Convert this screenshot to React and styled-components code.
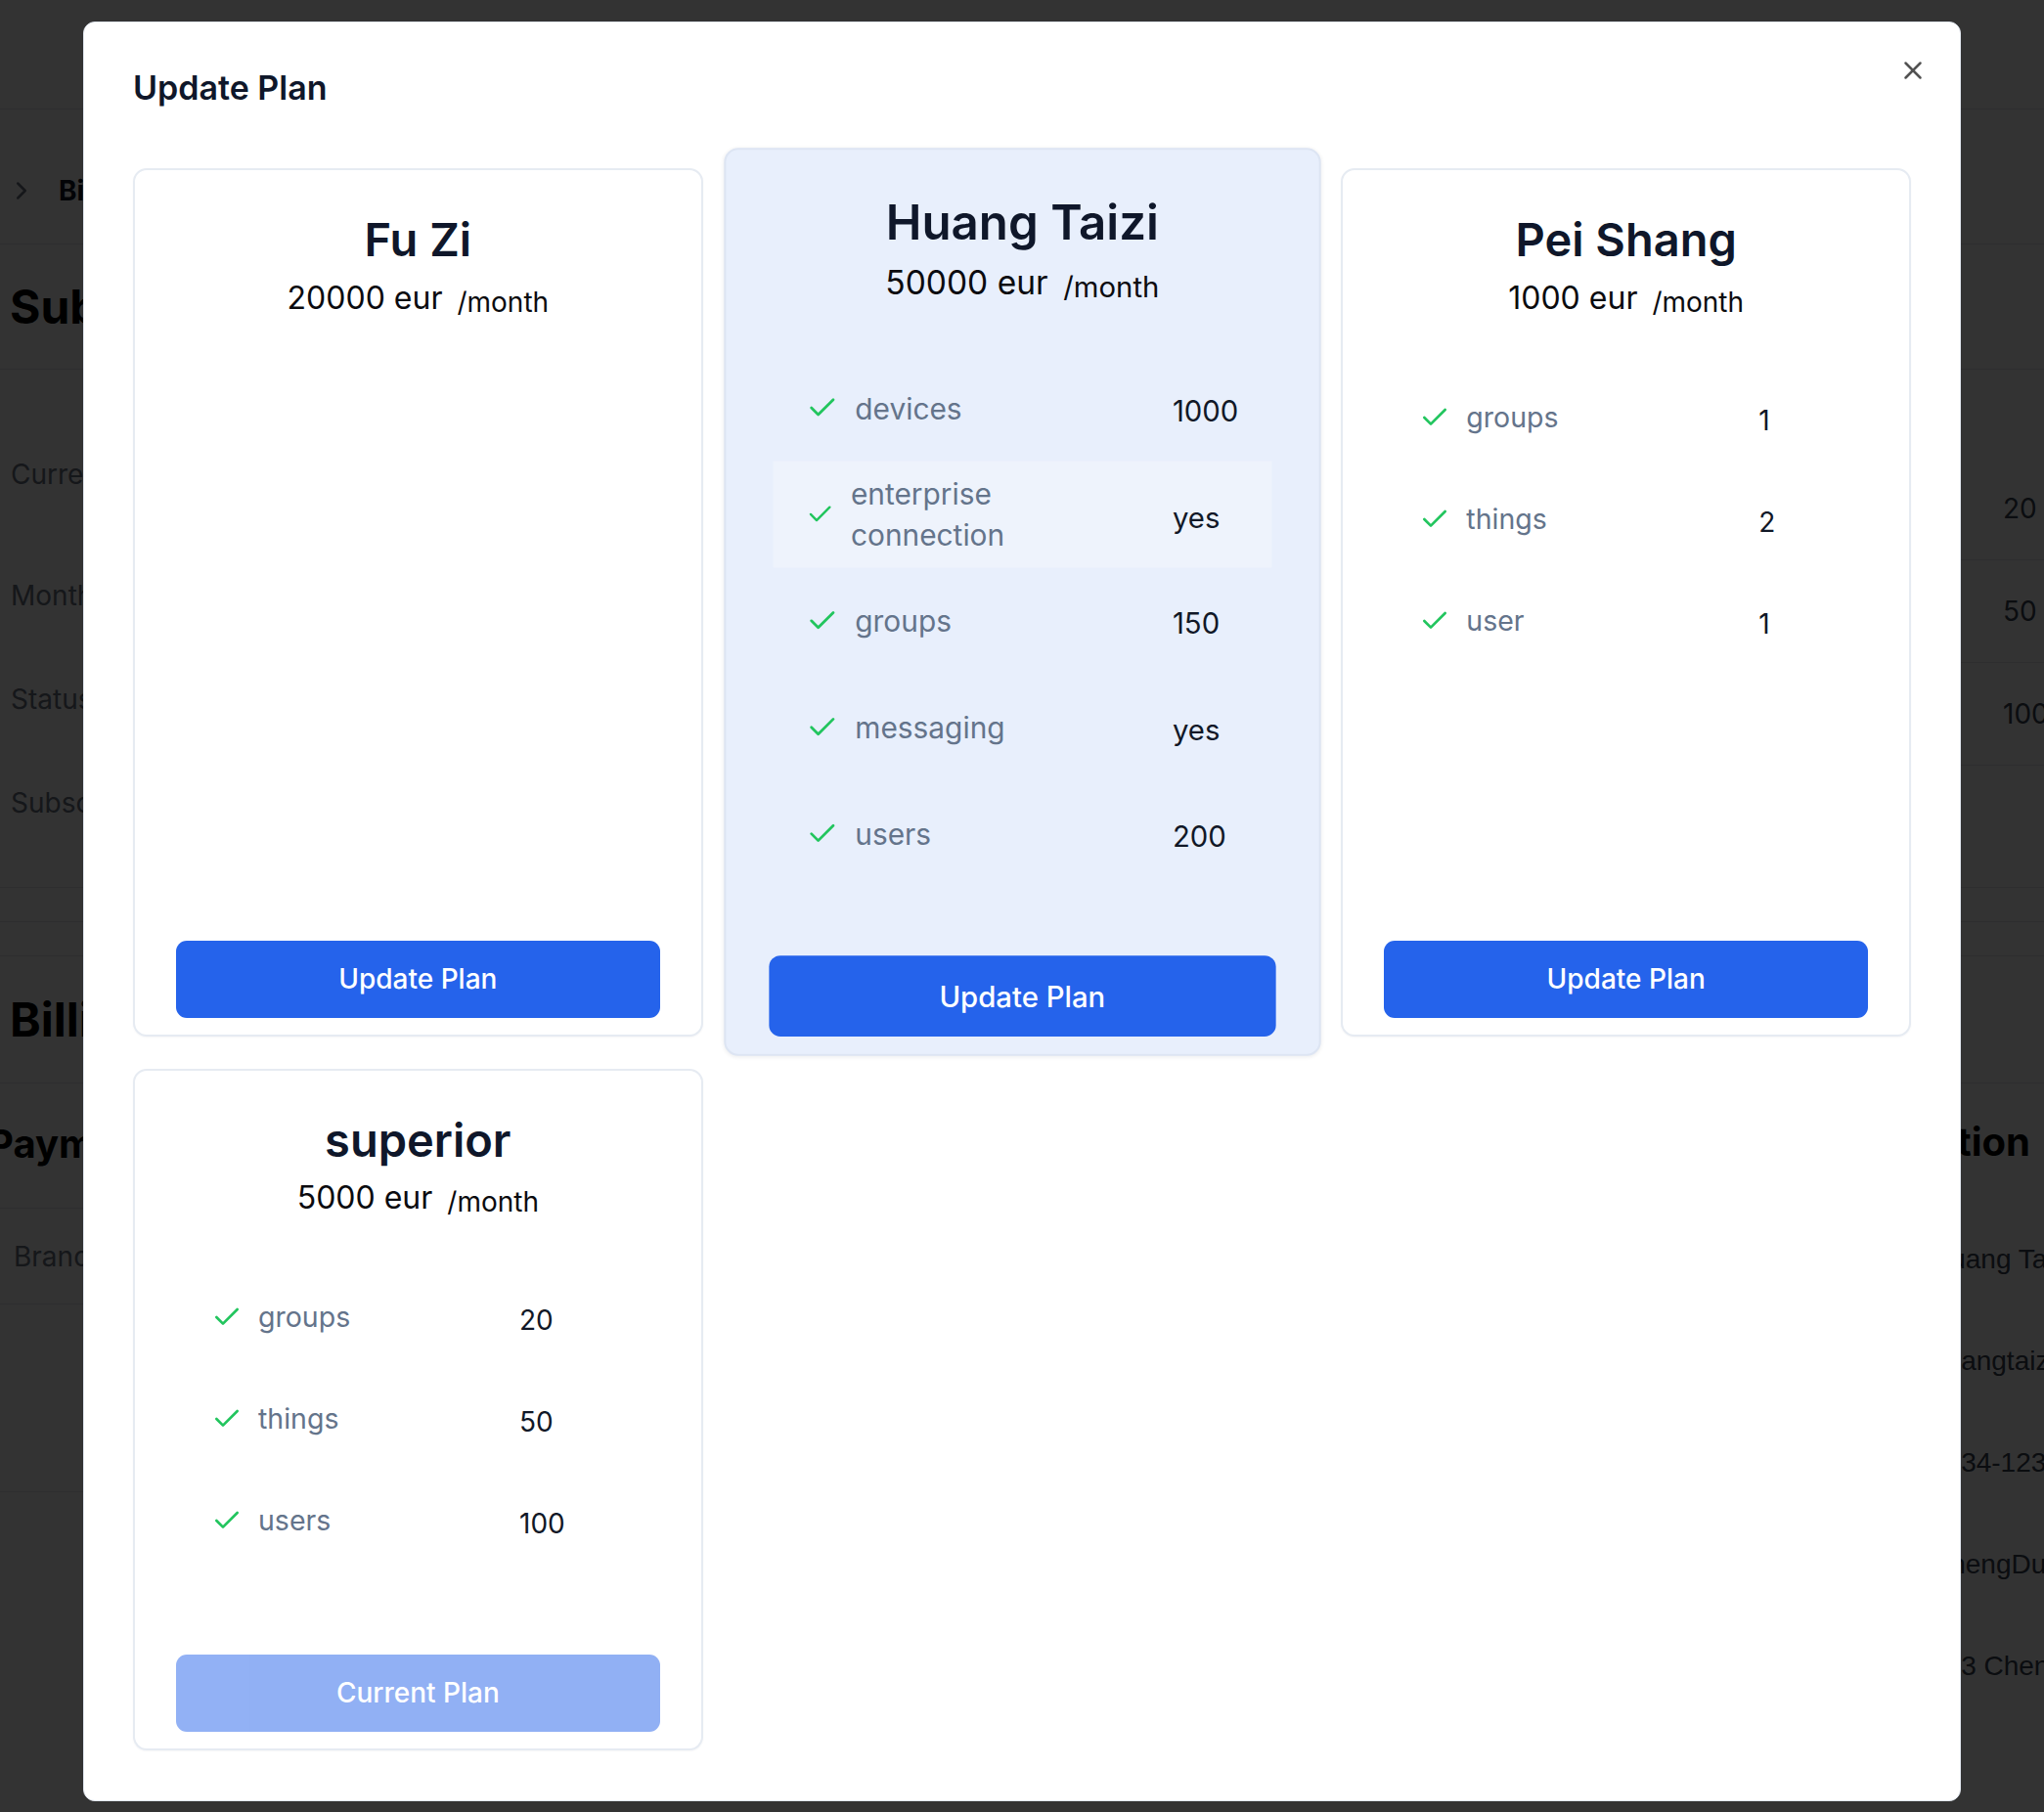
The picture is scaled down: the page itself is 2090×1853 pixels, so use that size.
import React from "react";
import styled, { createGlobalStyle } from "styled-components";
import { Check, X, ChevronRight } from "lucide-react";

const GlobalStyle = createGlobalStyle`
  html, body { margin: 0; padding: 0; }
  body { font-family: Inter, "Noto Sans", sans-serif; background: #fff; overflow: hidden; }
  * { box-sizing: border-box; }
`;

const plans = [
  { name: "Fu Zi", price: 20000, labelCol: 300, features: [] },
  {
    name: "Huang Taizi",
    price: 50000,
    featured: true,
    labelCol: 333,
    features: [
      ["devices", "1000"],
      ["enterprise connection", "yes", true],
      ["groups", "150"],
      ["messaging", "yes"],
      ["users", "200"],
    ],
  },
  {
    name: "Pei Shang",
    price: 1000,
    labelCol: 322,
    features: [
      ["groups", "1"],
      ["things", "2"],
      ["user", "1"],
    ],
  },
  {
    name: "superior",
    price: 5000,
    labelCol: 290,
    current: true,
    features: [
      ["groups", "20"],
      ["things", "50"],
      ["users", "100"],
    ],
  },
];

const details = [
  ["Current Plan", 142],
  ["Monthly Fee", 106],
  ["Status", 106],
  ["Subscribed At", 106],
];

const usage = [
  ["groups", "20"],
  ["things", "50"],
  ["users", "100"],
];

const billingInfo = [
  ["Name", "Huang Taizi"],
  ["Email", "huangtaizi@example.com"],
  ["Phone", "1234-1234-1234"],
  ["City", "ChengDu, Sichuan"],
  ["Address", "123 ChengDu Road"],
];

/* ---------- page behind the dialog ---------- */

const Page = styled.div`
  width: 2090px;
  height: 1853px;
  overflow: hidden;
  background: #fff;
  color: #111827;
  font-family: Inter, sans-serif;
`;

const TopBar = styled.header`
  height: 112px;
  border-bottom: 1px solid #e5e7eb;
`;

const Crumbs = styled.nav`
  height: 138px;
  padding: 28px 0 0 7px;
  display: flex;
  align-items: center;
  gap: 23px;
  border-bottom: 1px solid #e5e7eb;
  font-size: 28px;
  font-weight: 700;
  svg {
    color: #6b7280;
  }
`;

const SectionHead = styled.h1`
  margin: 0;
  height: ${(p) => p.$h}px;
  padding-left: 10px;
  display: flex;
  align-items: center;
  border-bottom: 1px solid #e5e7eb;
  font-size: 48px;
  font-weight: 700;
  color: #000;
`;

const Split = styled.div`
  display: grid;
  grid-template-columns: 1fr 1fr;
  height: ${(p) => p.$h}px;
  border-bottom: ${(p) => (p.$line ? "1px solid #e5e7eb" : "none")};
`;

const DetailList = styled.dl`
  margin: 0;
  padding: 36px 0 0 11px;
`;

const DetailRow = styled.div`
  height: ${(p) => p.$h}px;
  display: flex;
  align-items: center;
  font-size: 28px;
  color: #6b7280;
`;

const UsageTable = styled.div`
  padding-top: 90px;
`;

const UsageRow = styled.div`
  display: grid;
  grid-template-columns: 1fr 42px;
  align-items: center;
  height: 105px;
  border-bottom: 1px solid #e5e7eb;
  font-size: 28px;
  color: #374151;
  span:last-child {
    white-space: nowrap;
  }
`;

const Spacer = styled.div`
  height: 35px;
  border-bottom: 1px solid #e5e7eb;
`;

const Column = styled.div`
  display: flex;
  flex-direction: column;
`;

const SubHead = styled.h2`
  margin: 0;
  height: 128px;
  display: flex;
  align-items: center;
  justify-content: ${(p) => (p.$right ? "flex-end" : "flex-start")};
  padding: ${(p) => (p.$right ? "0 14px 10px 0" : "0 0 4px 0")};
  margin-left: ${(p) => (p.$right ? "0" : "-12px")};
  border-bottom: ${(p) => (p.$right ? "none" : "1px solid #e5e7eb")};
  font-size: 40px;
  font-weight: 700;
  color: #000;
  white-space: nowrap;
`;

const BrandRow = styled.div`
  height: 98px;
  padding-left: 14px;
  display: flex;
  align-items: center;
  border-bottom: 1px solid #e5e7eb;
  font-size: 28px;
  color: #6b7280;
`;

const EmptyBlock = styled.div`
  height: 192px;
  border-bottom: 1px solid #e5e7eb;
`;

const InfoRow = styled.div`
  display: grid;
  grid-template-columns: 1fr 116px;
  align-items: center;
  height: 104px;
  font-family: "Liberation Sans", Arial, sans-serif;
  font-size: 28px;
  color: #374151;
  span:last-child {
    white-space: nowrap;
  }
`;

/* ---------- dialog ---------- */

const Overlay = styled.div`
  position: fixed;
  inset: 0;
  background: rgba(0, 0, 0, 0.8);
  display: flex;
  justify-content: center;
  align-items: flex-start;
  padding-top: 22px;
`;

const Dialog = styled.section`
  position: relative;
  width: 1920px;
  padding: 42px 50px 51px;
  background: #fff;
  border: 1px solid #e2e8f0;
  border-radius: 12px;
  font-family: Inter, sans-serif;
`;

const Title = styled.h2`
  margin: 0;
  font-size: 34px;
  font-weight: 600;
  line-height: 1.45;
  color: #0f172a;
`;

const CloseButton = styled.button`
  position: absolute;
  top: 34px;
  right: 33px;
  width: 30px;
  height: 30px;
  padding: 0;
  border: 0;
  background: none;
  color: #525252;
  display: flex;
  cursor: pointer;
`;

const PlanGrid = styled.div`
  margin-top: 58px;
  display: grid;
  grid-template-columns: repeat(3, 1fr);
  column-gap: 35px;
  row-gap: 33px;
`;

const Card = styled.article`
  display: flex;
  flex-direction: column;
  min-height: 697px;
  padding: 42px 42px 17px;
  border: 2px solid ${(p) => (p.$featured ? "#dde5f3" : "#e6ebf2")};
  border-radius: 14px;
  background: ${(p) => (p.$featured ? "#e8effc" : "#fff")};
  transform: ${(p) => (p.$featured ? "scale(1.047)" : "none")};
  box-shadow: ${(p) =>
    p.$featured
      ? "0 1px 4px rgba(15, 23, 42, 0.08)"
      : "0 1px 2px rgba(15, 23, 42, 0.04)"};
`;

const PlanName = styled.h3`
  margin: 0;
  text-align: center;
  font-size: 47px;
  font-weight: 600;
  line-height: 1.22;
  color: #0f172a;
`;

const Price = styled.p`
  margin: 7px 0 0;
  text-align: center;
  font-size: 32px;
  line-height: 1.5;
  color: #0b0b0f;
  span {
    margin-left: 15px;
    font-size: 28px;
    line-height: 1;
    vertical-align: -3px;
  }
`;

const FeatureList = styled.div`
  margin: 46px 4px 67px;
`;

const FeatureRow = styled.div`
  display: grid;
  grid-template-columns: ${(p) => p.$labelCol}px 1fr;
  align-items: center;
  height: 104px;
  background: ${(p) => (p.$active ? "#eef3fc" : "transparent")};
`;

const Feature = styled.div`
  display: flex;
  align-items: center;
  gap: 16px;
  padding-left: 32px;
  font-size: 28.5px;
  line-height: 1.46;
  color: #64748b;
  svg {
    flex-shrink: 1;
    min-width: 0;
    color: #22c55e;
  }
`;

const Value = styled.span`
  padding: 6px 0 0 57px;
  font-size: 28px;
  line-height: 1.5;
  color: #111827;
`;

const PlanButton = styled.button`
  margin-top: auto;
  width: 100%;
  height: 79px;
  border: 0;
  border-radius: 11px;
  background: #2563eb;
  color: #fff;
  font-family: Inter, sans-serif;
  font-size: 28px;
  font-weight: 500;
  opacity: ${(p) => (p.disabled ? 0.5 : 1)};
  cursor: ${(p) => (p.disabled ? "not-allowed" : "pointer")};
`;

const PlanCard = ({ plan }) => (
  <Card $featured={plan.featured}>
    <PlanName>{plan.name}</PlanName>
    <Price>
      {plan.price} eur<span>/month</span>
    </Price>
    <FeatureList>
      {plan.features.map(([label, value, active]) => (
        <FeatureRow key={label} $labelCol={plan.labelCol} $active={active}>
          <Feature>
            <Check size={32} strokeWidth={2} />
            <span>{label}</span>
          </Feature>
          <Value>{value}</Value>
        </FeatureRow>
      ))}
    </FeatureList>
    <PlanButton disabled={plan.current}>
      {plan.current ? "Current Plan" : "Update Plan"}
    </PlanButton>
  </Card>
);

const BackgroundPage = () => (
  <Page>
    <TopBar />
    <Crumbs>
      <ChevronRight size={30} strokeWidth={2} />
      <span>Billing</span>
    </Crumbs>
    <SectionHead $h={128}>Subscription</SectionHead>
    <Split $h={530} $line>
      <DetailList>
        {details.map(([label, h]) => (
          <DetailRow key={label} $h={h}>
            {label}
          </DetailRow>
        ))}
      </DetailList>
      <UsageTable>
        {usage.map(([label, value]) => (
          <UsageRow key={label}>
            <span>{label}</span>
            <span>{value}</span>
          </UsageRow>
        ))}
      </UsageTable>
    </Split>
    <Spacer />
    <Spacer />
    <SectionHead $h={130}>Billing</SectionHead>
    <Split $h={620}>
      <Column>
        <SubHead>Payment Method</SubHead>
        <BrandRow>Brand</BrandRow>
        <EmptyBlock />
      </Column>
      <Column>
        <SubHead $right>Billing Information</SubHead>
        {billingInfo.map(([label, value]) => (
          <InfoRow key={label}>
            <span>{label}</span>
            <span>{value}</span>
          </InfoRow>
        ))}
      </Column>
    </Split>
  </Page>
);

export default function App() {
  return (
    <>
      <GlobalStyle />
      <BackgroundPage />
      <Overlay>
        <Dialog>
          <Title>Update Plan</Title>
          <CloseButton aria-label="Close">
            <X size={30} strokeWidth={2} />
          </CloseButton>
          <PlanGrid>
            {plans.map((plan) => (
              <PlanCard key={plan.name} plan={plan} />
            ))}
          </PlanGrid>
        </Dialog>
      </Overlay>
    </>
  );
}
